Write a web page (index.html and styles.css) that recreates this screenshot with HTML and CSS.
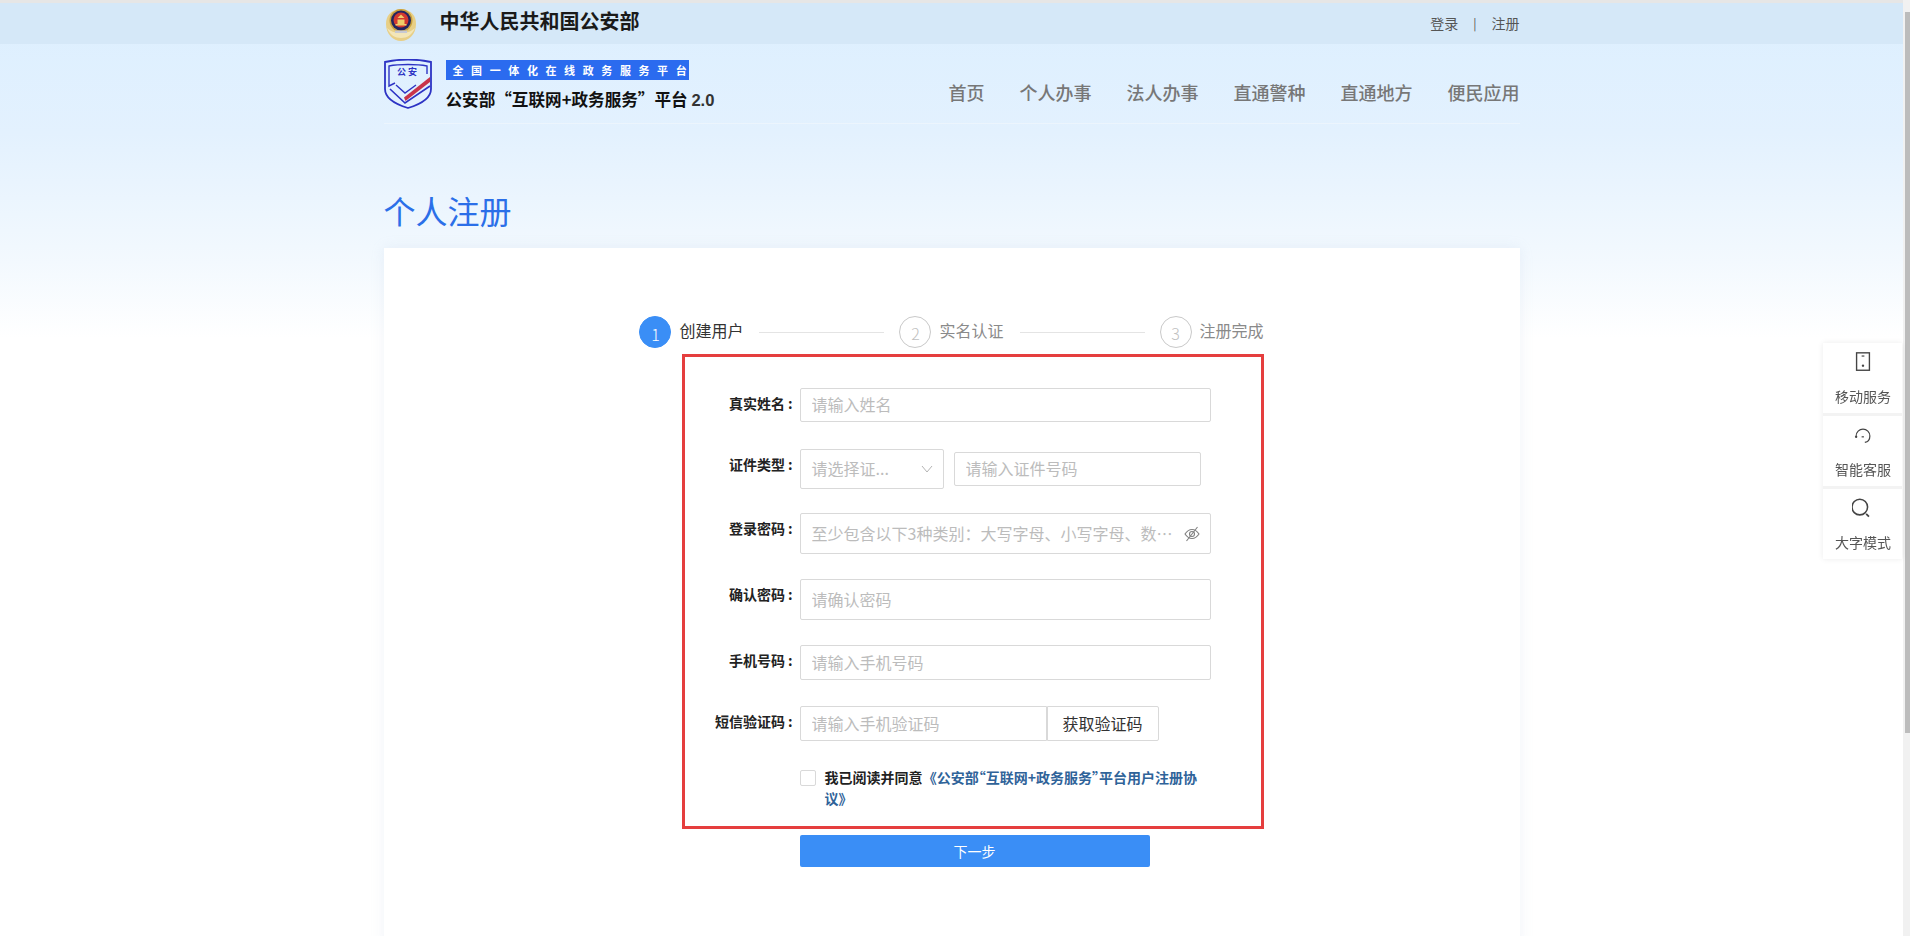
FILE: index.html
```html
<!DOCTYPE html>
<html lang="zh-CN">
<head>
<meta charset="utf-8">
<title>个人注册</title>
<link rel="stylesheet" href="styles.css">
</head>
<body>
<div class="viewport">
  <div class="page">
    <header class="gov-bar">
      <div class="wrap gov-inner">
        <div class="gov-brand">
          <svg class="emblem" viewBox="0 0 34 34" aria-hidden="true">
            <path d="M2 17C2 27 9 34 17 34s15-7 15-17c0-8-4-14-15-15C6 3 2 9 2 17z" fill="#e8cf86"/>
            <path d="M3 21c3 7 8 10 14 10s11-3 14-10c-3 3-8 5-14 5S6 24 3 21z" fill="#f3e6b8"/>
            <circle cx="17" cy="13.500" r="11.500" fill="#c9a23f"/>
            <circle cx="17" cy="13.500" r="10" fill="#23255f"/>
            <circle cx="17" cy="13" r="7.500" fill="#d3392f"/>
            <path d="M11.500 17h11v1.500h-11zM13.500 12.500h7V17h-7z" fill="#f0cf6a"/>
            <path d="M13.500 11h7L17 7.500z" fill="#f0cf6a"/>
            <path d="M11 23.500h12v2.500H11z" fill="#c7c9d3"/>
          </svg>
          <span class="gov-name">中华人民共和国公安部</span>
        </div>
        <nav class="auth-links">
          <a>登录</a><span class="auth-sep">|</span><a>注册</a>
        </nav>
      </div>
    </header>

    <div class="wrap site-bar">
      <div class="site-brand">
        <svg class="shield" viewBox="0 0 48 50" aria-hidden="true">
          <path d="M1 3C15 0 33 0 47 3V30C47 40 34 46 24 49C14 46 1 40 1 30Z" fill="none" stroke="#2d33c4" stroke-width="1.800"/>
          <path d="M43 15V7C33 5 15 5 5 7V27L11 24" fill="none" stroke="#2d33c4" stroke-width="1.400"/>
          <path d="M12 26L21 34L32 26" fill="none" stroke="#2d33c4" stroke-width="1.400"/>
          <path d="M6 30L21 44L46 27" fill="none" stroke="#2d33c4" stroke-width="1.600"/>
          <path d="M20 38.500L46 18V23L21.500 42Z" fill="#c8344a"/>
          <text x="24" y="16" class="shield-text">公安</text>
        </svg>
        <div class="site-titles">
          <div class="site-tag">全国一体化在线政务服务平台</div>
          <div class="site-name">公安部“互联网+政务服务”平台 <span class="site-ver">2.0</span></div>
        </div>
      </div>
      <nav class="main-nav">
        <a>首页</a><a>个人办事</a><a>法人办事</a><a>直通警种</a><a>直通地方</a><a>便民应用</a>
      </nav>
    </div>

    <main class="wrap">
      <h1 class="page-title">个人注册</h1>
      <section class="card">
        <ol class="steps">
          <li class="step step-active"><span class="step-num">1</span><span class="step-text">创建用户</span></li>
          <li class="step-line"></li>
          <li class="step"><span class="step-num">2</span><span class="step-text">实名认证</span></li>
          <li class="step-line"></li>
          <li class="step"><span class="step-num">3</span><span class="step-text">注册完成</span></li>
        </ol>

        <form class="form">
          <div class="row">
            <label class="label">真实姓名<span class="colon">:</span></label>
            <input class="input input-full h34" placeholder="请输入姓名">
          </div>
          <div class="row">
            <label class="label">证件类型<span class="colon">:</span></label>
            <div class="select">
              <span class="select-text">请选择证...</span>
              <svg class="chevron" viewBox="0 0 12 8" aria-hidden="true"><path d="M1 1l5 6 5-6" fill="none" stroke="#b4b4b4" stroke-width="1"/></svg>
            </div>
            <input class="input input-id h34" placeholder="请输入证件号码">
          </div>
          <div class="row">
            <label class="label">登录密码<span class="colon">:</span></label>
            <div class="pwd">
              <input class="input input-pwd" placeholder="至少包含以下3种类别：大写字母、小写字母、数字、特殊字符">
              <svg class="eye" viewBox="0 0 16 16" aria-hidden="true">
                <path d="M1 8c2-3 4.500-4.500 7-4.500S13 5 15 8c-2 3-4.500 4.500-7 4.500S3 11 1 8z" fill="none" stroke="#808080" stroke-width="1.100"/>
                <circle cx="8" cy="8" r="2.500" fill="none" stroke="#808080" stroke-width="1.100"/>
                <path d="M2.500 15L13.500 1" stroke="#808080" stroke-width="1.100"/>
              </svg>
            </div>
          </div>
          <div class="row">
            <label class="label">确认密码<span class="colon">:</span></label>
            <input class="input input-full h41" placeholder="请确认密码">
          </div>
          <div class="row">
            <label class="label">手机号码<span class="colon">:</span></label>
            <input class="input input-full h35" placeholder="请输入手机号码">
          </div>
          <div class="row">
            <label class="label">短信验证码<span class="colon">:</span></label>
            <input class="input input-sms h35" placeholder="请输入手机验证码">
            <button type="button" class="sms-btn">获取验证码</button>
          </div>
          <div class="row agree-row">
            <span class="checkbox"></span>
            <p class="agree">我已阅读并同意 <a class="agree-link">《公安部“互联网+政务服务”平台用户注册协议》</a></p>
          </div>
        </form>

        <button type="button" class="next">下一步</button>
      </section>
    </main>
  </div>
  <div class="scrollbar"><div class="scroll-thumb"></div></div>
</div>

<aside class="side">
  <div class="side-item">
    <svg class="side-icon" viewBox="0 0 24 24" aria-hidden="true">
      <rect x="5" y="2" width="14" height="19" fill="none" stroke="#444" stroke-width="1.500"/>
      <path d="M10.500 5.500h3" stroke="#444" stroke-width="1.300"/>
      <circle cx="12" cy="16" r="1.300" fill="#444"/>
    </svg>
    <span>移动服务</span>
  </div>
  <div class="side-item">
    <svg class="side-icon" viewBox="0 0 24 24" aria-hidden="true">
      <path d="M4.500 13a7.500 7.500 0 0 1 15 0c0 4-2.500 6.500-5.500 7" fill="none" stroke="#444" stroke-width="1.300"/>
      <circle cx="4.500" cy="14" r="1.300" fill="#444"/>
      <path d="M10.500 14h2.500" stroke="#444" stroke-width="1.300"/>
    </svg>
    <span>智能客服</span>
  </div>
  <div class="side-item">
    <svg class="side-icon" viewBox="0 0 24 24" aria-hidden="true">
      <circle cx="8.500" cy="11" r="8.500" fill="none" stroke="#444" stroke-width="1.700"/>
      <path d="M15.500 18.500l3 3" stroke="#444" stroke-width="1.900"/>
    </svg>
    <span>大字模式</span>
  </div>
</aside>
</body>
</html>
```

FILE: styles.css
```css
* { box-sizing: border-box; }
html, body { margin: 0; height: 100%; overflow: hidden; }
body {
  font-family: "Noto Sans CJK SC", "Liberation Sans", sans-serif;
  color: #222;
  background: #fff;
}
a { text-decoration: none; color: inherit; }
.viewport { display: flex; height: 936px; }
.page {
  flex: 1;
  min-width: 0;
  border-top: 3px solid #e6e6e6;
  background: linear-gradient(180deg, #dcefff 0, #e3f1fe 130px, #f3f9fe 260px, #ffffff 335px);
}
.scrollbar { width: 7px; padding: 12px 0 0 2px; background: #f1f1f1; }
.scroll-thumb { height: 721px; background: #bcbcbc; }
.wrap { width: 1136px; margin: 0 auto; }

/* top strip */
.gov-bar { height: 41px; background: #d5e8f8; }
.gov-inner { display: flex; align-items: center; justify-content: space-between; height: 100%; }
.gov-brand { display: flex; align-items: center; gap: 22px; }
.emblem { width: 34px; height: 34px; display: block; margin-top: 1px; }
.gov-name { font-size: 20px; font-weight: 700; color: #1a1a1a; line-height: 40px; margin-top: -5px; }
.auth-links { display: flex; align-items: center; font-size: 14px; color: #555; margin-top: -2px; }
.auth-sep { margin: 0 15px; font-size: 12px; }

/* site bar */
.site-bar {
  display: flex;
  align-items: flex-start;
  justify-content: space-between;
  height: 80px;
  border-bottom: 1px solid #ecf5fd;
}
.site-brand { display: flex; gap: 14px; padding-top: 15px; }
.shield { width: 48px; height: 50px; display: block; }
.shield-text { font-size: 9px; font-weight: 700; letter-spacing: 2px; fill: #2d33c4; text-anchor: middle; font-family: "Noto Sans CJK SC", sans-serif; }
.site-titles { display: flex; flex-direction: column; padding-top: 1px; }
.site-tag {
  width: 243px;
  height: 20px;
  line-height: 20px;
  background: #2b6bef;
  color: #fff;
  font-size: 11px;
  font-weight: 700;
  text-align: center;
  letter-spacing: 7.600px;
  padding-left: 7px;
  white-space: nowrap;
}
.site-name { font-size: 16.600px; font-weight: 700; color: #111; line-height: 24px; margin-top: 7px; white-space: nowrap; }
.site-ver { color: #333; font-family: "Liberation Sans", sans-serif; }
.main-nav { display: flex; gap: 35px; font-size: 18px; font-weight: 500; color: #777; padding-top: 35px; line-height: 26px; }

/* title + card */
.page-title { margin: 0; padding: 62px 0 0; height: 124px; font-size: 32px; font-weight: 400; line-height: 48px; color: #2b6fe8; }
.card { background: #fff; height: 700px; padding-top: 68px; box-shadow: 0 0 12px rgba(170, 190, 215, .18); }

/* steps */
.steps { display: flex; justify-content: center; align-items: center; list-style: none; margin: 0; padding: 0; height: 32px; }
.step { display: flex; align-items: center; gap: 8px; font-size: 16px; color: #8a8a8a; white-space: nowrap; }
.step-text { margin-top: -4px; }
.step-active { color: #333; }
.step-num {
  width: 32px;
  height: 32px;
  border: 1px solid #c9c9c9;
  border-radius: 50%;
  color: #c0c0c0;
  font-size: 16px;
  font-weight: 300;
  line-height: 32px;
  text-align: center;
}
.step-active .step-num { background: #3a8ef6; border-color: #3a8ef6; color: #fff; line-height: 34px; }
.step-line { width: 125px; height: 1px; background: #e4e4e4; margin: 0 15px 0 16px; }

/* form */
.form {
  display: grid;
  grid-template-rows: 61px 64px 66px 66px 61px 64px auto;
  width: 582px;
  height: 475px;
  margin: 6px 0 0 298px;
  padding: 31px 0 0 115px;
  border: 3px solid #e53e3e;
}
.row { display: flex; align-items: flex-start; position: relative; }
.label {
  position: absolute;
  right: calc(100% + 7px);
  font-size: 14px;
  font-weight: 700;
  line-height: 30px;
  white-space: nowrap;
  color: #222;
}
.colon { margin-left: 3px; }
.input {
  display: block;
  font: inherit;
  font-size: 16px;
  color: #333;
  border: 1px solid #d9d9d9;
  border-radius: 2px;
  padding: 0 11px 2px;
  background: #fff;
  outline: none;
}
.input::placeholder { color: #bcbcbc; opacity: 1; }
.input-full { width: 411px; }
.h34 { height: 34px; }
.h35 { height: 35px; }
.h41 { height: 41px; }
.select {
  display: flex;
  align-items: center;
  justify-content: space-between;
  width: 144px;
  height: 40px;
  border: 1px solid #d9d9d9;
  border-radius: 2px;
  padding: 0 11px 3px;
  font-size: 16px;
  color: #bcbcbc;
}
.chevron { width: 12px; height: 8px; margin: 3px -1px 0 0; }
.input-id { width: 247px; margin: 3px 0 0 10px; }
.pwd { position: relative; width: 411px; }
.input-pwd { width: 100%; height: 41px; padding-right: 35px; text-overflow: ellipsis; }
.eye { position: absolute; top: 13px; right: 11px; width: 16px; height: 16px; }
.input-sms { width: 247px; border-radius: 2px 0 0 2px; }
.sms-btn {
  width: 112px;
  height: 35px;
  font: inherit;
  font-size: 16px;
  color: #333;
  background: #fff;
  border: 1px solid #d9d9d9;
  border-radius: 0 2px 2px 0;
  padding: 0 0 2px;
}

/* agreement */
.agree-row { gap: 9px; }
.checkbox { flex: none; width: 16px; height: 16px; border: 1px solid #d9d9d9; border-radius: 2px; background: #fff; }
.agree {
  margin: -3px 0 0;
  width: 378px;
  font-size: 14px;
  font-weight: 700;
  line-height: 21px;
  color: #222;
  font-feature-settings: "palt";
}
.agree-link { color: #2f6399; padding-left: 4px; }

/* next */
.next {
  display: block;
  width: 350px;
  height: 32px;
  margin: 6px 0 0 416px;
  border: 0;
  border-radius: 2px;
  background: #3a8ef6;
  color: #fff;
  font: inherit;
  font-size: 14px;
}

/* floating side panel */
.side {
  position: fixed;
  top: 343px;
  right: 8px;
  width: 79px;
  display: flex;
  flex-direction: column;
  gap: 3px;
  background: #f3f3f3;
  box-shadow: 0 0 6px rgba(0, 0, 0, .08);
}
.side-item {
  display: flex;
  flex-direction: column;
  align-items: center;
  height: 70px;
  padding: 8px 0 0 1px;
  background: #fff;
  font-size: 14px;
  color: #555;
  line-height: 20px;
}
.side-icon { width: 22px; height: 22px; margin-bottom: 13px; display: block; }
```
